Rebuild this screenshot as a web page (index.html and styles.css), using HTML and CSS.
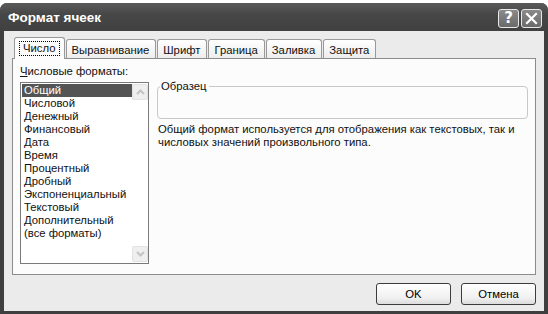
FILE: index.html
```html
<!DOCTYPE html>
<html lang="ru">
<head>
    <meta charset="UTF-8">
    <meta name="viewport" content="width=device-width, initial-scale=1.0">
    <title>Формат ячеек</title>
    <link rel="stylesheet" href="styles.css">
</head>
<body>
    <div class="window">
        <div class="titlebar">
            <span class="title">Формат ячеек</span>
            <div class="caption-buttons">
                <span class="cap-btn">?</span>
                <span class="cap-btn">
                    <svg width="13" height="13" viewBox="0 0 13 13"><path d="M2 2 L11 11 M11 2 L2 11" stroke="#fff" stroke-width="2.2" stroke-linecap="square"/></svg>
                </span>
            </div>
        </div>
        <div class="client">
            <div class="tabs">
                <span class="tab active"><span class="focus">Число</span></span>
                <span class="tab">Выравнивание</span>
                <span class="tab">Шрифт</span>
                <span class="tab">Граница</span>
                <span class="tab">Заливка</span>
                <span class="tab">Защита</span>
            </div>
            <div class="panel">
                <div class="col-left">
                    <div class="label"><u>Ч</u>исловые форматы:</div>
                    <div class="listbox">
                        <ul class="items">
                            <li class="selected">Общий</li>
                            <li>Числовой</li>
                            <li>Денежный</li>
                            <li>Финансовый</li>
                            <li>Дата</li>
                            <li>Время</li>
                            <li>Процентный</li>
                            <li>Дробный</li>
                            <li>Экспоненциальный</li>
                            <li>Текстовый</li>
                            <li>Дополнительный</li>
                            <li>(все форматы)</li>
                        </ul>
                        <div class="scrollbar">
                            <span class="arrow">
                                <svg width="9" height="6" viewBox="0 0 9 6"><path d="M1 5 L4.5 1.5 L8 5" fill="none" stroke="#c4c4c4" stroke-width="2"/></svg>
                            </span>
                            <span class="arrow">
                                <svg width="9" height="6" viewBox="0 0 9 6"><path d="M1 1 L4.5 4.5 L8 1" fill="none" stroke="#c4c4c4" stroke-width="2"/></svg>
                            </span>
                        </div>
                    </div>
                </div>
                <div class="col-right">
                    <fieldset class="sample"><legend>Образец</legend></fieldset>
                    <p class="desc">Общий формат используется для отображения как текстовых, так и числовых значений произвольного типа.</p>
                </div>
            </div>
            <div class="footer">
                <button type="button" class="btn">OK</button>
                <button type="button" class="btn">Отмена</button>
            </div>
        </div>
    </div>
</body>
</html>
```

FILE: styles.css
```css
body {
    margin: 0;
    background-color: #ffffff;
    font-family: "Liberation Sans", Arial, sans-serif;
    font-size: 11.3px;
    color: #111;
}

.window {
    width: 548px;
    height: 311px;
    margin-top: 3px;
    background-color: #3f3f3f;
    border-radius: 7px 7px 0 0;
    display: flex;
    flex-direction: column;
}

.titlebar {
    height: 28px;
    padding: 0 6px 0 8px;
    display: flex;
    align-items: center;
    justify-content: space-between;
    background: linear-gradient(to bottom, #5a5a5a, #474747 40%, #404040);
    border-radius: 7px 7px 0 0;
}

.title {
    color: #fff;
    font-weight: bold;
    font-size: 13.5px;
    font-family: "Liberation Sans", Arial, sans-serif;
}

.caption-buttons {
    display: flex;
    gap: 2px;
    margin-top: 2px;
}

.cap-btn {
    width: 19px;
    height: 17px;
    border: 1px solid #e8e8e8;
    border-radius: 3px;
    background: linear-gradient(to bottom, #8a8a8a, #6a6a6a);
    color: #fff;
    font-weight: bold;
    font-size: 15px;
    font-family: "DejaVu Sans", sans-serif;
    display: flex;
    align-items: center;
    justify-content: center;
}

.client {
    flex: 1;
    margin: 0 4px 3px 4px;
    padding: 6px 8px 0 8px;
    background-color: #ebebeb;
    display: flex;
    flex-direction: column;
}

.tabs {
    height: 22px;
    padding-left: 2px;
    display: flex;
    align-items: flex-end;
    gap: 1px;
}

.tab {
    height: 19px;
    padding: 0 6px 0 5px;
    border: 1px solid #999;
    border-bottom: none;
    border-radius: 3px 3px 0 0;
    background: linear-gradient(to bottom, #ffffff, #ececec);
    display: flex;
    align-items: center;
}

.tab.active {
    height: 21px;
    padding: 0 4px;
    background: #fcfcfc;
    position: relative;
    z-index: 1;
}

.focus {
    padding: 0 3px;
    border: 1px dotted #000;
    line-height: 13px;
}

.panel {
    height: 217px;
    box-sizing: border-box;
    margin-top: -1px;
    padding: 6px 7px 0 7px;
    border: 1px solid #8c8c8c;
    background-color: #fcfcfc;
    display: flex;
    gap: 8px;
}

.col-left {
    width: 129px;
}

.label {
    line-height: 13px;
}

.listbox {
    margin-top: 4px;
    height: 182px;
    box-sizing: border-box;
    border: 1px solid #7a7a7a;
    padding: 1px 0 1px 1px;
    background-color: #fff;
    display: flex;
}

.items {
    flex: 1;
    margin: 0;
    padding: 0;
    list-style: none;
}

.items li {
    height: 13px;
    line-height: 13px;
    padding-left: 2px;
    white-space: nowrap;
}

.items li.selected {
    background-color: #545454;
    color: #fff;
}

.scrollbar {
    width: 16px;
    display: flex;
    flex-direction: column;
    justify-content: space-between;
}

.arrow {
    height: 16px;
    background-color: #efefef;
    border: 1px solid #e2e2e2;
    box-sizing: border-box;
    border-radius: 2px;
    display: flex;
    align-items: center;
    justify-content: center;
}

.col-right {
    flex: 1;
    padding-top: 15px;
}

.sample {
    margin: 0;
    padding: 0;
    height: 39px;
    box-sizing: border-box;
    border: 1px solid #c8c8c8;
    border-radius: 4px;
}

.sample legend {
    margin-left: 2px;
    padding: 0 2px 0 1px;
    line-height: 13px;
}

.desc {
    margin: 4px 0 0 1px;
    line-height: 13px;
}

.footer {
    margin-top: 8px;
    display: flex;
    justify-content: flex-end;
    gap: 10px;
}

.btn {
    width: 75px;
    height: 22px;
    border: 1px solid #3c3c3c;
    border-radius: 3px;
    background: linear-gradient(to bottom, #ffffff, #f0f0f0 70%, #dcdcdc);
    font-family: "Liberation Sans", Arial, sans-serif;
    font-size: 11.3px;
    color: #000;
    padding: 0;
}
```
